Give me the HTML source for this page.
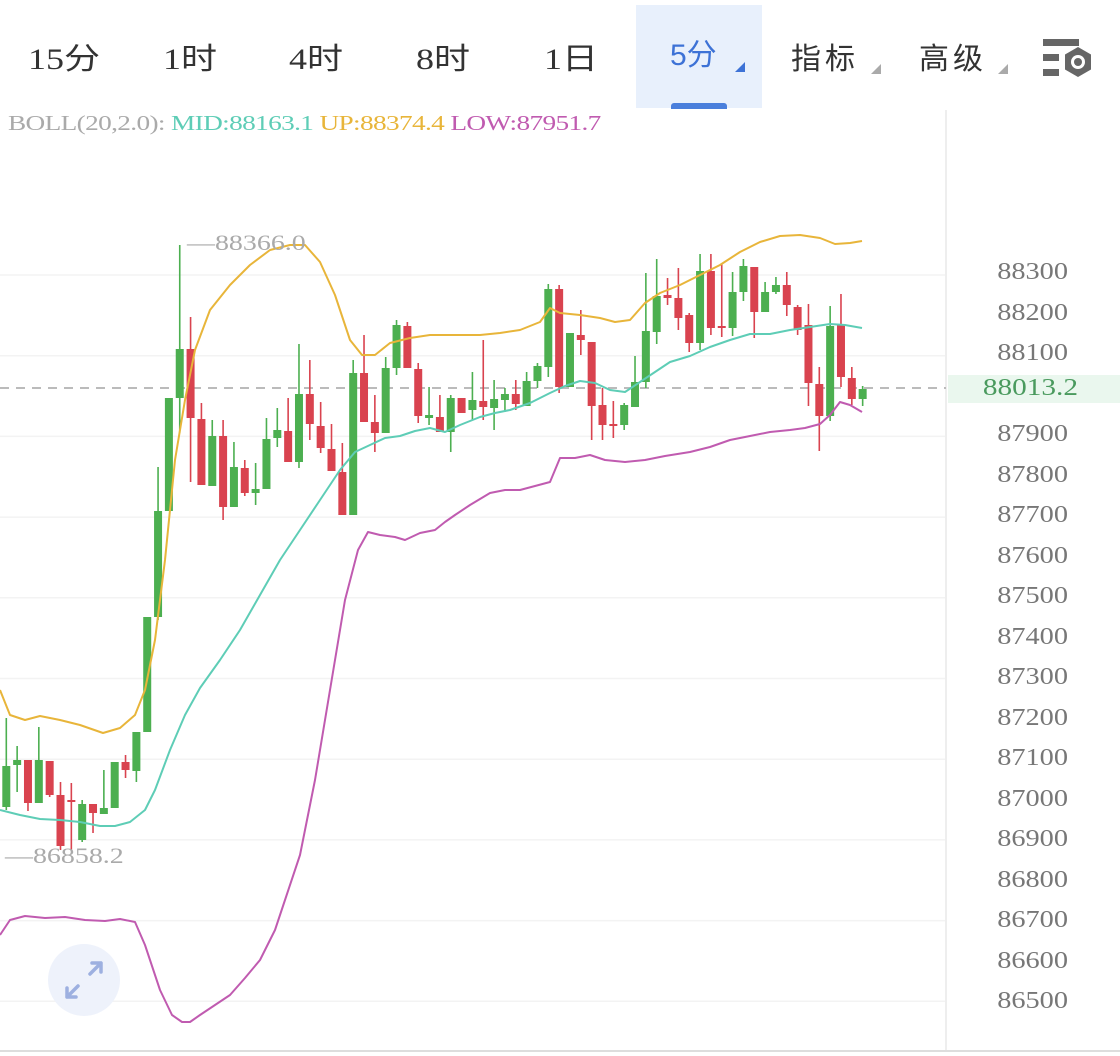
<!DOCTYPE html>
<html><head><meta charset="utf-8">
<style>
html,body{margin:0;padding:0;background:#fff;width:1120px;height:1056px;overflow:hidden}
body{position:relative;font-family:"Liberation Serif","Noto Serif CJK SC","Noto Sans CJK SC",serif}
.tab{position:absolute;top:36px;font-size:30px;color:#333;white-space:nowrap;line-height:40px}
.sx{transform:scaleX(1.2);transform-origin:left center}
.tri{position:absolute;width:0;height:0;border-left:10px solid transparent;border-bottom:10px solid #aaa}
</style></head><body>
<div style="position:absolute;left:636px;top:5px;width:126px;height:103px;background:#e8f0fc"></div>
<div style="position:absolute;left:671px;top:103px;width:56px;height:6px;background:#4a7fdc;border-radius:3px 3px 0 0"></div>
<div class="tab sx" style="left:28px">15<span style="font-family:'Noto Sans CJK SC',sans-serif">分</span></div>
<div class="tab sx" style="left:163px">1<span style="font-family:'Noto Sans CJK SC',sans-serif">时</span></div>
<div class="tab sx" style="left:289px">4<span style="font-family:'Noto Sans CJK SC',sans-serif">时</span></div>
<div class="tab sx" style="left:416px">8<span style="font-family:'Noto Sans CJK SC',sans-serif">时</span></div>
<div class="tab sx" style="left:544px">1<span style="font-family:'Noto Sans CJK SC',sans-serif">日</span></div>
<div class="tab" style="left:670px;color:#3d72d6;font-family:'Liberation Sans','Noto Sans CJK SC',sans-serif">5分</div>
<div class="tri" style="left:735px;top:62px;border-bottom-color:#3d72d6"></div>
<div class="tab" style="left:791px;font-family:'Noto Sans CJK SC',sans-serif;letter-spacing:4px">指标</div>
<div class="tri" style="left:871px;top:64px"></div>
<div class="tab" style="left:919px;font-family:'Noto Sans CJK SC',sans-serif;letter-spacing:4px">高级</div>
<div class="tri" style="left:998px;top:64px"></div>
<svg style="position:absolute;left:1040px;top:34px" width="58" height="48">
<rect x="3" y="5" width="36" height="7" fill="#666"/>
<rect x="3" y="20" width="16" height="7" fill="#666"/>
<rect x="3" y="35" width="16" height="7" fill="#666"/>
<polygon points="38,13 51,20.5 51,35.5 38,43 25,35.5 25,20.5" fill="#666"/>
<circle cx="38" cy="28" r="7" fill="#fff"/><circle cx="38" cy="28" r="4" fill="#666"/>
</svg>
<div style="position:absolute;left:8px;top:111px;font-size:21px;white-space:nowrap;letter-spacing:-0.5px;transform:scaleX(1.3);transform-origin:left center">
<span style="color:#aaa">BOLL(20,2.0):</span> <span style="color:#5ecdb6">MID:88163.1</span> <span style="color:#e8b53a">UP:88374.4</span> <span style="color:#c05bb0">LOW:87951.7</span></div>

<svg id="ch" style="position:absolute;left:0;top:0" width="1120" height="1056"></svg>

<div style="position:absolute;left:948px;top:375px;width:172px;height:28px;background:#eaf7ee"></div>
<div id="lbl"></div>
<div style="position:absolute;left:187px;top:230px;font-size:22px;color:#aaa;white-space:nowrap;transform:scaleX(1.27);transform-origin:left center">—88366.0</div>
<div style="position:absolute;left:5px;top:843px;font-size:22px;color:#aaa;white-space:nowrap;transform:scaleX(1.27);transform-origin:left center">—86858.2</div>
<svg style="position:absolute;left:46px;top:942px" width="76" height="76">
<circle cx="38" cy="38" r="36" fill="#eef2fb"/>
<g stroke="#9db0e0" stroke-width="3.5" fill="none" stroke-linecap="round" stroke-linejoin="round">
<path d="M44 32 L55 21 M46 21 L55 21 L55 30"/>
<path d="M32 44 L21 55 M21 46 L21 55 L30 55"/>
</g></svg>
<script>
var s='';
for(var i=0;i<10;i++){var y=275+i*80.7;s+='<line x1="0" y1="'+y+'" x2="946" y2="'+y+'" stroke="#f3f3f3" stroke-width="1.5"/>';}
s+='<line x1="946" y1="110" x2="946" y2="1050" stroke="#eee" stroke-width="2"/>';
s+='<line x1="0" y1="1051" x2="1120" y2="1051" stroke="#ddd" stroke-width="2"/>';
s+='<line x1="0" y1="388" x2="946" y2="388" stroke="#bbb" stroke-width="2" stroke-dasharray="9,7"/>';
var c=[[1,766,807,718,810],[1,760,765,746,792],[0,760,803,760,811],[1,760,803,727,803],[0,761,795,761,797],[0,795,846,782,850],[0,800,802,783,850],[1,804,840,800,842],[0,804,813,804,833],[1,808,814,770,814],[1,762,808,762,808],[0,762,770,755,778],[1,732,771,732,782],[1,617,732,617,732],[1,511,617,467,620],[1,398,511,398,511],[1,349,398,245,433],[0,349,418,317,482],[0,419,485,403,485],[1,436,486,420,486],[0,436,507,420,520],[1,467,507,442,507],[0,468,493,460,496],[1,489,493,463,505],[1,439,489,418,489],[1,430,438,408,447],[0,431,462,398,462],[1,394,462,344,468],[0,394,424,360,440],[0,426,448,402,453],[0,449,471,424,471],[0,472,515,443,515],[1,373,515,360,515],[0,373,422,335,422],[0,422,433,395,452],[1,368,433,357,433],[1,325,368,320,375],[0,326,368,322,368],[0,369,416,363,423],[1,415,418,387,425],[0,417,432,395,432],[1,398,432,395,452],[0,398,413,398,413],[1,400,410,372,420],[0,401,407,340,420],[1,399,408,380,430],[1,394,400,388,412],[0,394,404,380,410],[1,381,406,372,406],[1,366,381,363,388],[1,289,367,284,377],[0,289,387,285,393],[1,333,387,333,387],[0,335,340,310,355],[0,342,406,342,440],[0,405,425,388,440],[0,424,426,401,438],[1,405,425,403,430],[1,382,407,356,407],[1,331,382,273,388],[1,296,332,259,344],[0,295,298,278,305],[0,298,318,268,330],[0,315,343,313,352],[1,271,343,254,350],[0,271,328,254,335],[0,326,328,264,337],[1,292,328,272,336],[1,266,292,259,301],[0,267,312,267,338],[1,292,312,282,312],[1,285,292,277,294],[0,285,305,272,316],[0,307,330,305,335],[0,325,383,304,406],[0,384,416,367,451],[1,326,416,306,421],[0,325,377,294,387],[0,378,399,367,405],[1,389,399,386,406]];
for(var i=0;i<c.length;i++){var x=6.3+i*10.84,d=c[i],col=d[0]?'#4caf50':'#d9434f';
s+='<line x1="'+x+'" y1="'+d[3]+'" x2="'+x+'" y2="'+d[4]+'" stroke="'+col+'" stroke-width="1.6"/>';
var h=Math.max(2,d[2]-d[1]);s+='<rect x="'+(x-4)+'" y="'+d[1]+'" width="8" height="'+h+'" fill="'+col+'"/>';}
function pl(p,col){return '<polyline points="'+p+'" fill="none" stroke="'+col+'" stroke-width="2" stroke-linejoin="round"/>';}
s+=pl("0,690 10,715 25,720 40,716 60,720 80,725 103,733 120,728 135,715 145,690 155,640 165,560 175,460 185,400 195,350 210,310 230,285 250,265 270,250 290,245 305,245 320,262 335,295 350,340 362,355 375,355 390,343 410,338 430,335 460,335 480,335 500,333 520,330 540,322 550,308 560,313 580,315 600,318 615,322 630,320 645,303 660,293 680,285 700,275 720,265 740,252 760,242 780,236 800,235 820,238 835,244 850,243 862,241","#e8b53a");
s+=pl("0,810 20,815 40,819 60,820 80,822 100,826 115,826 130,822 145,810 155,790 170,750 185,715 200,688 220,660 240,630 260,595 280,560 300,530 320,500 340,470 355,452 370,445 385,438 400,436 415,431 430,428 445,432 460,425 480,417 495,413 510,410 530,403 550,393 565,386 580,381 595,383 610,390 625,392 640,382 655,372 670,362 690,356 710,347 730,340 750,334 770,334 790,330 810,327 830,324 845,325 862,328","#5ecdb6");
s+=pl("0,935 10,920 25,916 45,918 65,917 85,920 105,921 120,919 135,922 145,945 160,990 172,1015 182,1022 190,1022 200,1015 215,1005 230,995 245,978 260,960 275,930 285,900 300,855 315,780 330,690 345,600 358,550 368,532 380,535 395,537 405,540 420,533 435,530 445,522 455,515 470,505 490,493 505,490 520,490 535,486 550,482 560,458 575,458 590,455 605,460 625,462 645,460 665,456 690,452 710,447 730,440 750,436 770,432 790,430 805,428 820,424 830,415 840,402 850,405 862,412","#c05bb0");
document.getElementById('ch').innerHTML=s;
var L=[88300,88200,88100,null,87900,87800,87700,87600,87500,87400,87300,87200,87100,87000,86900,86800,86700,86600,86500],h='';
for(var i=0;i<L.length;i++){var y=272+i*40.5;var t=L[i]===null?'88013.2':L[i];var col=L[i]===null?'#4a9a5e':'#777';if(L[i]===null)y=388;
var sc=L[i]===null?1.22:1.18;
h+='<div style="position:absolute;right:'+(L[i]===null?42:52)+'px;top:'+(y-14)+'px;font-size:24px;line-height:28px;color:'+col+';transform:scaleX('+sc+');transform-origin:right center">'+t+'</div>';}
document.getElementById('lbl').innerHTML=h;
</script>
</body></html>
